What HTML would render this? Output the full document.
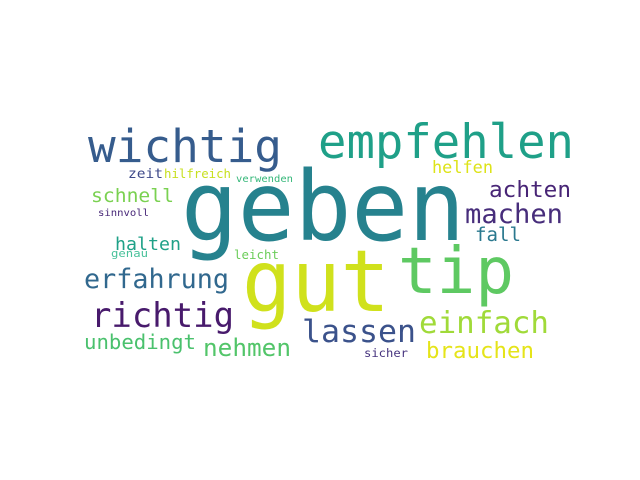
<!DOCTYPE html>
<html><head><meta charset="utf-8"><style>
html,body{margin:0;padding:0;background:#fff;width:640px;height:480px;overflow:hidden}
text{font-family:"DejaVu Sans Mono","Liberation Mono",monospace}
</style></head><body>
<svg width="640" height="480" xmlns="http://www.w3.org/2000/svg">
<rect width="640" height="480" fill="#fff"/>
<g lengthAdjust="spacingAndGlyphs">
<text x="181" y="240" font-size="96" fill="#26828e" textLength="284" lengthAdjust="spacingAndGlyphs">geben</text>
<text x="242" y="311" font-size="86" fill="#d0e11c" textLength="148" lengthAdjust="spacingAndGlyphs">gut</text>
<text x="398" y="293" font-size="64" fill="#5ec962" textLength="116" lengthAdjust="spacingAndGlyphs">tip</text>
<text x="318" y="158" font-size="47" fill="#1fa088" textLength="256" lengthAdjust="spacingAndGlyphs">empfehlen</text>
<text x="88" y="162" font-size="45" fill="#365c8d" textLength="194" lengthAdjust="spacingAndGlyphs">wichtig</text>
<text x="432" y="173" font-size="16.5" fill="#dde318" textLength="61" lengthAdjust="spacingAndGlyphs">helfen</text>
<text x="489" y="197" font-size="22" fill="#482576" textLength="82" lengthAdjust="spacingAndGlyphs">achten</text>
<text x="465" y="223" font-size="26.5" fill="#472d7b" textLength="98" lengthAdjust="spacingAndGlyphs">machen</text>
<text x="475" y="241" font-size="18.5" fill="#2a788e" textLength="46" lengthAdjust="spacingAndGlyphs">fall</text>
<text x="302" y="342" font-size="31" fill="#3b528b" textLength="114" lengthAdjust="spacingAndGlyphs">lassen</text>
<text x="419" y="333" font-size="30" fill="#a0da39" textLength="130" lengthAdjust="spacingAndGlyphs">einfach</text>
<text x="426" y="358" font-size="22" fill="#e5e419" textLength="108" lengthAdjust="spacingAndGlyphs">brauchen</text>
<text x="364" y="357" font-size="11.5" fill="#46337e" textLength="44" lengthAdjust="spacingAndGlyphs">sicher</text>
<text x="128" y="178" font-size="13.5" fill="#3e4989" textLength="35" lengthAdjust="spacingAndGlyphs">zeit</text>
<text x="164" y="178" font-size="12" fill="#c8e020" textLength="67" lengthAdjust="spacingAndGlyphs">hilfreich</text>
<text x="236" y="182" font-size="10" fill="#35b779" textLength="57" lengthAdjust="spacingAndGlyphs">verwenden</text>
<text x="91" y="202" font-size="19" fill="#7ad151" textLength="83" lengthAdjust="spacingAndGlyphs">schnell</text>
<text x="98" y="216" font-size="10" fill="#482878" textLength="51" lengthAdjust="spacingAndGlyphs">sinnvoll</text>
<text x="115" y="250" font-size="18" fill="#1fa188" textLength="66" lengthAdjust="spacingAndGlyphs">halten</text>
<text x="111" y="257" font-size="11" fill="#48c19a" textLength="37" lengthAdjust="spacingAndGlyphs">genau</text>
<text x="234" y="259" font-size="12" fill="#6ccd5a" textLength="45" lengthAdjust="spacingAndGlyphs">leicht</text>
<text x="84" y="288" font-size="26.5" fill="#31688e" textLength="145" lengthAdjust="spacingAndGlyphs">erfahrung</text>
<text x="91" y="327" font-size="34" fill="#481a6c" textLength="143" lengthAdjust="spacingAndGlyphs">richtig</text>
<text x="84" y="349" font-size="20" fill="#4ac16d" textLength="112" lengthAdjust="spacingAndGlyphs">unbedingt</text>
<text x="203" y="356" font-size="24" fill="#52c569" textLength="88" lengthAdjust="spacingAndGlyphs">nehmen</text>
</g>
</svg>
</body></html>
